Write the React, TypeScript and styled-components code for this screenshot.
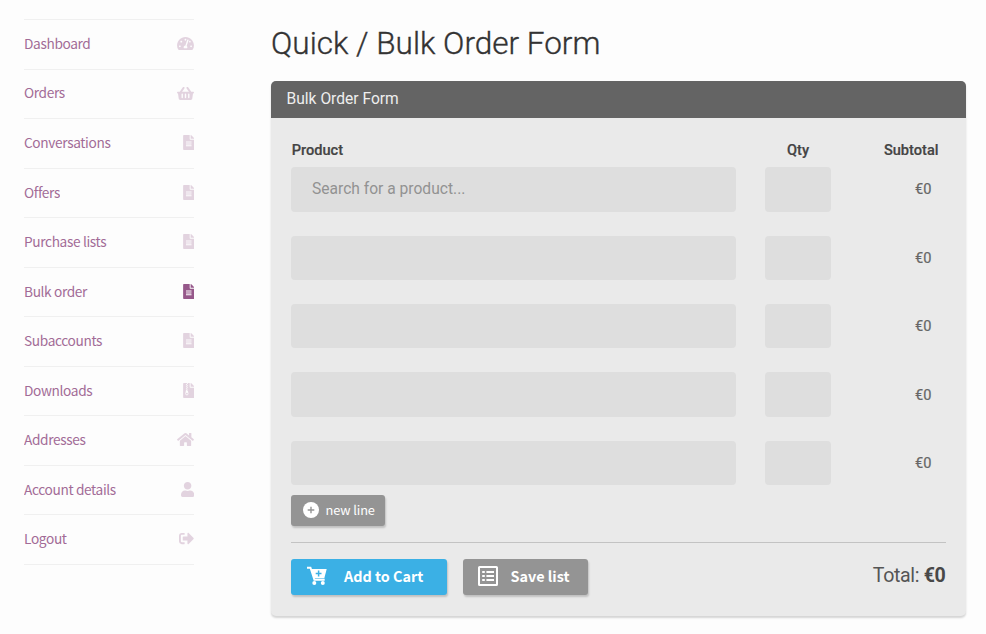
import React from "react";
import styled, { createGlobalStyle } from "styled-components";
import {
  FaTachometerAlt,
  FaShoppingBasket,
  FaFileAlt,
  FaFileArchive,
  FaHome,
  FaUser,
  FaSignOutAlt,
} from "react-icons/fa";
import type { IconType } from "react-icons";

const sans = `"Noto Sans CJK SC", "Open Sans", sans-serif`;

const GlobalStyle = createGlobalStyle`
  *, *::before, *::after { box-sizing: border-box; }
  body {
    margin: 0;
    background: #fdfdfd;
    font-family: Roboto, sans-serif;
    color: #4a4a4a;
  }
`;

const Page = styled.div`
  display: flex;
  align-items: flex-start;
  width: 986px;
  height: 634px;
  overflow: hidden;
`;

const Sidebar = styled.nav`
  width: 170px;
  margin: 19px 76.5px 0 24px;
  border-top: 1px solid #f0f0f0;
`;

const NavItem = styled.a<{ $active?: boolean; $iconWidth: number }>`
  display: flex;
  align-items: center;
  justify-content: space-between;
  height: 49.55px;
  padding-bottom: 1.5px;
  border-bottom: 1px solid #f0f0f0;
  color: #96588a;
  font: 400 13.7px/20px ${sans};
  letter-spacing: -0.36px;
  text-decoration: none;

  span {
    padding-bottom: 1.2px;
    opacity: 0.88;
  }

  svg {
    flex: none;
    width: ${(p) => p.$iconWidth}px;
    height: 15px;
    margin-right: -0.2px;
    opacity: ${(p) => (p.$active ? 1 : 0.25)};
  }
`;

const Main = styled.main`
  width: 695.5px;
  padding-top: 25px;
`;

const Title = styled.h1`
  margin: 0 0 19px;
  padding-left: 0.5px;
  font: 300 31.5px/37px Roboto, sans-serif;
  -webkit-text-stroke: 0.35px currentColor;
  color: #333;
  white-space: nowrap;
`;

const Panel = styled.section`
  height: 535px;
  background: #eaeaea;
  border-radius: 5px;
  box-shadow: 0 2px 2px rgba(0, 0, 0, 0.16);
`;

const PanelHeader = styled.header`
  height: 37px;
  padding-left: 16px;
  border-radius: 5px 5px 0 0;
  background: #646464;
  color: #eee;
  font-size: 15.6px;
  line-height: 36px;
`;

const PanelBody = styled.div`
  padding: 21px 20.5px 0;
`;

const Line = styled.div`
  display: grid;
  grid-template-columns: 445.3px 65.5px 1fr;
  column-gap: 29px;
  align-items: center;
`;

const HeadLine = styled(Line)`
  height: 22px;
  margin-bottom: 6.3px;
  font-size: 14.6px;
  font-weight: 500;
  color: #444;
`;

const HeadCell = styled.span<{ $align?: string }>`
  text-align: ${(p) => p.$align ?? "left"};
  padding-left: ${(p) => (p.$align ? "0" : "0.7px")};
  padding-right: ${(p) => (p.$align === "right" ? "7px" : "0")};
  -webkit-text-stroke: 0.2px currentColor;
`;

const Lines = styled.div`
  display: grid;
  row-gap: 24px;
`;

const Field = styled.input`
  width: 100%;
  height: 44.4px;
  padding: 0 21px;
  border: 0;
  border-radius: 4px;
  background: #dedede;
  font: 400 15.6px Roboto, sans-serif;

  &::placeholder { color: #929292; opacity: 1; }
`;

const Subtotal = styled.span`
  padding-right: 14px;
  text-align: right;
  font-size: 14.6px;
  color: #666;
  -webkit-text-stroke: 0.2px currentColor;
`;

const Button = styled.button<{ $primary?: boolean; $width: number }>`
  display: flex;
  align-items: center;
  width: ${(p) => p.$width}px;
  height: 36px;
  padding: 0 0 1px;
  border: 0;
  border-radius: 3px;
  background: ${(p) => (p.$primary ? "#3bb0e5" : "#949494")};
  box-shadow: 1px 2px 2px rgba(0, 0, 0, 0.18);
  color: #fff;
  font: 700 14.4px/20px ${sans};
  white-space: nowrap;
  svg { flex: none; }
`;

const SmallButton = styled(Button)`
  height: 31px;
  margin-top: 9.8px;
  padding-left: 11.5px;
  gap: 7px;
  font-size: 12.8px;
  font-weight: 400;
  letter-spacing: -0.1px;
`;

const CartButton = styled(Button)`
  padding-left: 15px;
  gap: 16px;
`;

const SaveButton = styled(Button)`
  padding-left: 15px;
  gap: 12.5px;
`;

const Footer = styled.footer`
  display: flex;
  align-items: flex-start;
  gap: 16px;
  margin-top: 16px;
  padding-top: 15.5px;
  border-top: 1px solid #c3c3c3;
`;

const Total = styled.div`
  margin-left: auto;
  font-size: 19.6px;
  letter-spacing: -0.35px;
  line-height: 33px;
  color: #555;
  b { font-weight: 700; color: #484848; }
`;

const CartPlus = () => (
  <svg width="22" height="20" viewBox="0 0 22 20">
    <path d="M1 1.8h3.5l3.9 11.9h10.3" fill="none" stroke="#fff" strokeWidth="1.9" />
    <path d="M5 3h15.7l-2.4 9.2H7.9z" fill="#fff" />
    <circle cx="8.3" cy="17" r="2" fill="#fff" />
    <circle cx="16.8" cy="17" r="2" fill="#fff" />
    <path d="M12.6 4.6v5.8M9.7 7.5h5.8" stroke="#3bb0e5" strokeWidth="1.5" />
  </svg>
);

const CirclePlus = () => (
  <svg width="16" height="16" viewBox="0 0 16 16">
    <circle cx="8" cy="8" r="8" fill="#fff" />
    <path d="M8 4.7v6.6M4.7 8h6.6" stroke="#949494" strokeWidth="1.4" />
  </svg>
);

const ListBox = () => (
  <svg width="20" height="20" viewBox="0 0 20 20">
    <rect x="1" y="1" width="18" height="18" rx="0.6" fill="none" stroke="#fff" strokeWidth="2" />
    <path
      d="M4.2 6h2.6M4.2 10h2.6M4.2 14h2.6M8.4 6h7.6M8.4 10h7.6M8.4 14h7.6"
      stroke="#fff"
      strokeWidth="2"
    />
  </svg>
);

const links: { label: string; Icon: IconType; width: number; active?: boolean }[] = [
  { label: "Dashboard", Icon: FaTachometerAlt, width: 17 },
  { label: "Orders", Icon: FaShoppingBasket, width: 17 },
  { label: "Conversations", Icon: FaFileAlt, width: 11.5 },
  { label: "Offers", Icon: FaFileAlt, width: 11.5 },
  { label: "Purchase lists", Icon: FaFileAlt, width: 11.5 },
  { label: "Bulk order", Icon: FaFileAlt, width: 11.5, active: true },
  { label: "Subaccounts", Icon: FaFileAlt, width: 11.5 },
  { label: "Downloads", Icon: FaFileArchive, width: 11.5 },
  { label: "Addresses", Icon: FaHome, width: 17 },
  { label: "Account details", Icon: FaUser, width: 13.2 },
  { label: "Logout", Icon: FaSignOutAlt, width: 15 },
];

const placeholders = ["Search for a product...", "", "", "", ""];

export default function App() {
  return (
    <Page>
      <GlobalStyle />
      <Sidebar>
        {links.map(({ label, Icon, width, active }) => (
          <NavItem key={label} $active={active} $iconWidth={width}>
            <span>{label}</span>
            <Icon />
          </NavItem>
        ))}
      </Sidebar>
      <Main>
        <Title>Quick / Bulk Order Form</Title>
        <Panel>
          <PanelHeader>Bulk Order Form</PanelHeader>
          <PanelBody>
            <HeadLine>
              <HeadCell>Product</HeadCell>
              <HeadCell $align="center">Qty</HeadCell>
              <HeadCell $align="right">Subtotal</HeadCell>
            </HeadLine>
            <Lines>
              {placeholders.map((text, i) => (
                <Line key={i}>
                  <Field placeholder={text} />
                  <Field />
                  <Subtotal>€0</Subtotal>
                </Line>
              ))}
            </Lines>
            <SmallButton $width={94}>
              <CirclePlus />
              new line
            </SmallButton>
            <Footer>
              <CartButton $primary $width={156}>
                <CartPlus />
                Add to Cart
              </CartButton>
              <SaveButton $width={125}>
                <ListBox />
                Save list
              </SaveButton>
              <Total>
                Total: <b>€0</b>
              </Total>
            </Footer>
          </PanelBody>
        </Panel>
      </Main>
    </Page>
  );
}
